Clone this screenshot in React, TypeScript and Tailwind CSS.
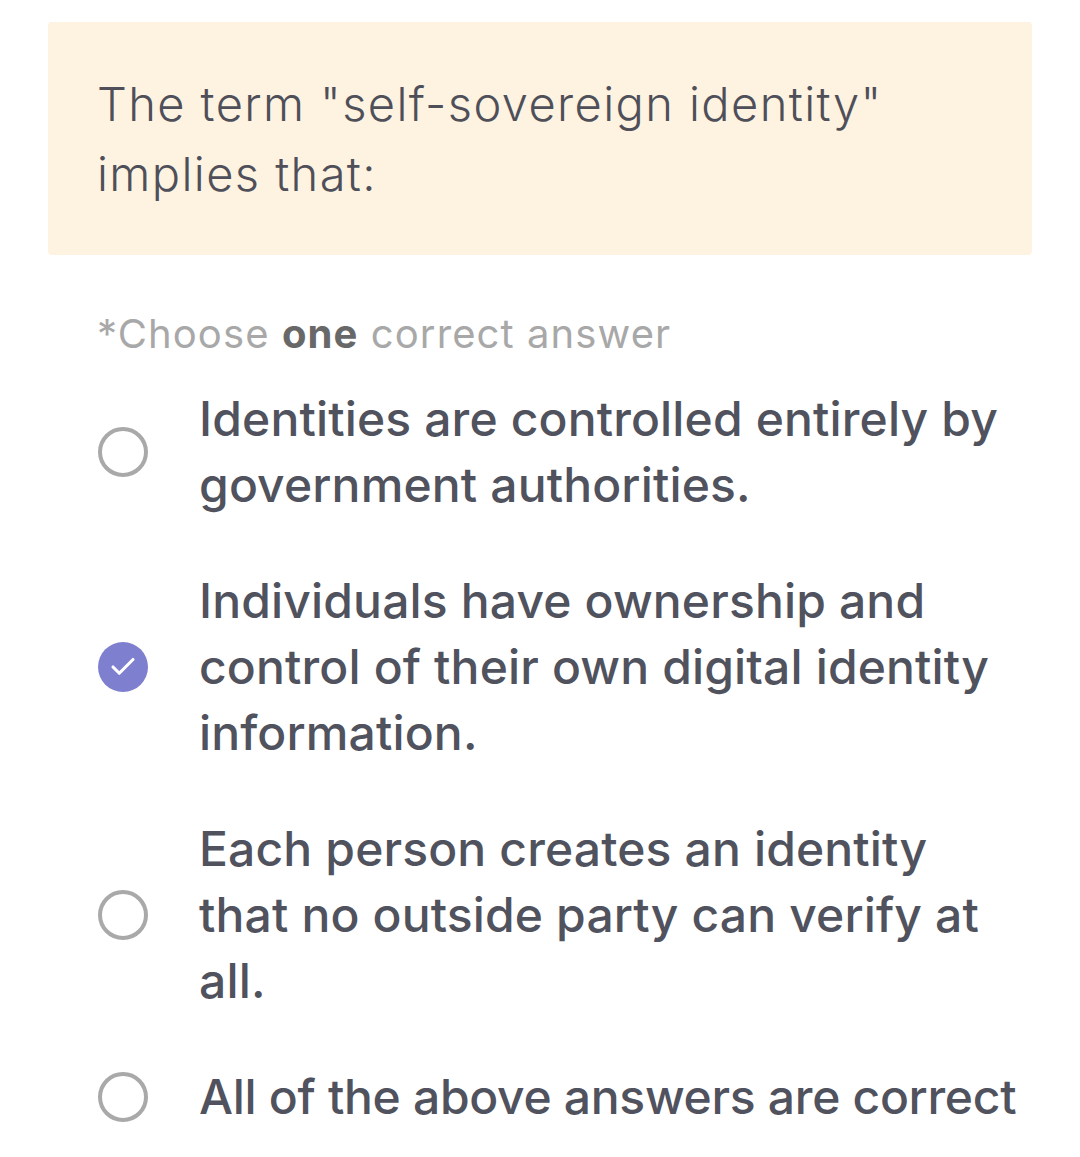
import { Check } from 'lucide-react';

const options = [
  { text: 'Identities are controlled entirely by government authorities.', checked: false },
  { text: 'Individuals have ownership and control of their own digital identity information.', checked: true },
  { text: 'Each person creates an identity that no outside party can verify at all.', checked: false },
  { text: 'All of the above answers are correct', checked: false, single: true },
];

export default function App() {
  return (
    <div className="min-h-screen bg-white pt-[22px] pl-[48px] pr-[20px]" style={{ fontFamily: 'Inter, "Noto Sans", sans-serif' }}>
      {/* Question card */}
      <div className="w-[984px] h-[233px] bg-[#fef3e1] rounded-[4px] pl-[49px] pr-10 pt-[47px]">
        <p className="text-[47px] leading-[70px] font-light text-[#4f4f59] tracking-[1.4px] w-[840px]">
          The term "self-sovereign identity" implies that:
        </p>
      </div>

      <p className="mt-[54px] pl-[49px] text-[40px] leading-[50px] text-[#a8a8a8] tracking-[1.1px]">
        *Choose <span className="font-bold text-[#686868]">one</span> correct answer
      </p>

      <div className="mt-[27px] flex flex-col gap-[50px]">
        {options.map((o) => (
          <Option key={o.text} text={o.text} checked={o.checked} single={!!o.single} />
        ))}
      </div>
    </div>
  );
}

function Option({ text, checked, single }: { text: string; checked: boolean; single: boolean }) {
  return (
    <div className="flex items-center">
      <div className="w-[151px] flex justify-center pr-[2px] shrink-0">
        {checked ? (
          <div className="w-[50px] h-[50px] rounded-full bg-[#7e7fcf] flex items-center justify-center">
            <Check size={30} strokeWidth={2.5} className="text-white" />
          </div>
        ) : (
          <div className="w-[50px] h-[50px] rounded-full border-[4px] border-[#a9a9a9]" />
        )}
      </div>
      <p
        className={`text-[48px] leading-[66px] font-medium text-[#50525e] w-[825px] shrink-0 ${
          single ? 'whitespace-nowrap tracking-[-0.3px]' : 'tracking-[0.15px]'
        }`}
      >
        {text}
      </p>
    </div>
  );
}
